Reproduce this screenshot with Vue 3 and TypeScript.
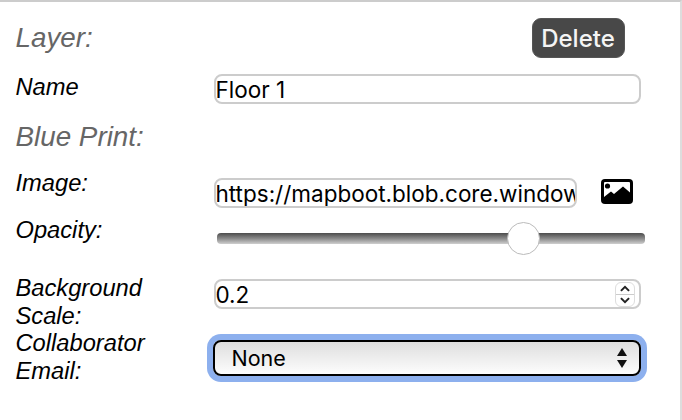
<script setup lang="ts">
import { ref } from 'vue'
const name = ref('Floor 1')
const image = ref('https://mapboot.blob.core.windows.net/images/floor1.png')
const opacity = ref(0.735)
const scale = ref(0.2)
const collaborator = ref('None')
</script>

<template>
  <div class="panel">
    <div class="head-row">
      <h2 class="section">Layer:</h2>
      <button class="delete" type="button">Delete</button>
    </div>
    <div class="row name-row">
      <label class="label">Name</label>
      <input v-model="name" class="field" type="text" />
    </div>
    <h2 class="section blue">Blue Print:</h2>
    <div class="row image-row">
      <label class="label">Image:</label>
      <div class="image-control">
        <input v-model="image" class="field" type="text" />
        <svg class="pic" viewBox="0 0 32 25" aria-hidden="true">
          <rect width="32" height="25" rx="4" fill="#000" />
          <rect x="3" y="3" width="26" height="17" rx="1" fill="#fff" />
          <circle cx="6.5" cy="7" r="2.6" fill="#000" />
          <path d="M3 18l7-5.500 3 2.500 9-7.500 7 6v6.500H3z" fill="#000" />
        </svg>
      </div>
    </div>
    <div class="row opacity-row">
      <label class="label">Opacity:</label>
      <input v-model="opacity" class="range" type="range" min="0" max="1" step="0.001" />
    </div>
    <div class="row scale-row">
      <label class="label">Background Scale:</label>
      <div class="number-wrap">
        <input v-model="scale" class="field number" type="number" step="0.1" />
        <span class="spin" aria-hidden="true">
          <svg viewBox="0 0 20 25"><path d="M5.500 8.500L10 4l4.500 4.500M5.500 16.500L10 21l4.500-4.500" fill="none" stroke="#222" stroke-width="2.200" /></svg>
        </span>
      </div>
    </div>
    <div class="row collab-row">
      <label class="label">Collaborator Email:</label>
      <div class="select-wrap">
        <select v-model="collaborator" class="select">
          <option>None</option>
        </select>
        <svg class="arrows" viewBox="0 0 12 20" aria-hidden="true"><path d="M6 0l5 8H1zM6 20l-5-8h10z" fill="#111" /></svg>
      </div>
    </div>
  </div>
</template>

<style>
html, body { margin: 0; background: #fff; }
</style>

<style scoped>
.panel {
  box-sizing: border-box;
  width: 682px;
  height: 420px;
  overflow: hidden;
  border-top: 2px solid #ccc;
  border-right: 2px solid #ddd;
  padding: 16px 0 0 15.500px;
  font-family: "Liberation Sans", Arial, sans-serif;
  color: #000;
}
.head-row {
  display: flex;
  justify-content: space-between;
  align-items: center;
  height: 40px;
  padding-right: 55.500px;
  margin-bottom: 16px;
}
.section {
  margin: 0;
  font-size: 27.800px;
  line-height: 32px;
  font-weight: 400;
  font-style: italic;
  color: #666;
}
.delete {
  width: 93px;
  height: 40px;
  border: 1px solid #555;
  border-radius: 9px;
  background: #484848;
  color: #f4f4f4;
  padding: 0;
  font-family: Inter, "Liberation Sans", sans-serif;
  font-size: 24px;
  font-weight: 500;
  letter-spacing: 0;
}
.row {
  display: grid;
  grid-template-columns: 198px 1fr;
}
.label {
  font-size: 23.700px;
  line-height: 28px;
  font-style: italic;
}
.field {
  box-sizing: border-box;
  width: 427px;
  height: 30px;
  border: 2px solid #ccc;
  border-radius: 8px;
  background: #fff;
  padding: 0;
  margin: 0;
  outline: none;
  color: #000;
  font-family: Inter, "Liberation Sans", sans-serif;
  font-size: 22.500px;
  letter-spacing: 0;
}
.name-row { height: 30px; }
.name-row .label { margin-top: -1px; }
.blue { margin-top: 17px; }
.image-row { margin-top: 25px; height: 30px; }
.image-row .label { margin-top: -9px; }
.image-control {
  display: flex;
  align-items: center;
  gap: 24px;
}
.image-control .field { width: 363px; }
.pic { width: 32px; height: 25px; flex: none; margin-top: -3px; }
.opacity-row { height: 40px; margin-top: 10px; }
.opacity-row .label { margin-top: -2px; }
.range {
  appearance: none;
  -webkit-appearance: none;
  width: 428px;
  height: 34px;
  margin: 3px 0 0 3px;
  background: transparent;
}
.range::-webkit-slider-runnable-track {
  height: 11px;
  border-radius: 4px;
  background: linear-gradient(#4c4c4c, #909090 55%, #cfcfcf);
}
.range::-webkit-slider-thumb {
  -webkit-appearance: none;
  appearance: none;
  box-sizing: border-box;
  width: 33px;
  height: 33px;
  margin-top: -11px;
  border-radius: 50%;
  border: 1px solid #bbb;
  background: #fff;
}
.scale-row { margin-top: 16px; height: 56px; }
.number-wrap { position: relative; width: 427px; height: 30px; margin-top: 5px; }
.number { appearance: textfield; -moz-appearance: textfield; }
.number::-webkit-inner-spin-button,
.number::-webkit-outer-spin-button { -webkit-appearance: none; margin: 0; }
.spin {
  position: absolute;
  right: 6px;
  top: 3px;
  width: 20px;
  height: 25px;
  border: 1px solid #ddd;
  border-radius: 6px;
  box-sizing: border-box;
  background: linear-gradient(#fff 48%, #ccc 48%, #ccc 52%, #fff 52%);
}
.spin svg { display: block; width: 18px; height: 23px; }
.collab-row { height: 56px; }
.collab-row .label { margin-top: -1px; }
.select-wrap { position: relative; width: 428px; height: 36px; margin: 10px 0 0 -1px; }
.select {
  appearance: none;
  -webkit-appearance: none;
  box-sizing: border-box;
  width: 100%;
  height: 36px;
  border: 2px solid #000;
  border-radius: 8px;
  box-shadow: 0 0 0 6px #8db0ee;
  outline: none;
  background: linear-gradient(#dedede, #ececec 45%, #fdfdfd);
  padding: 0 0 0 17px;
  margin: 0;
  color: #000;
  font-family: Inter, "Liberation Sans", sans-serif;
  font-size: 21.500px;
  letter-spacing: 0;
}
.arrows {
  position: absolute;
  right: 13px;
  top: 8px;
  width: 12px;
  height: 20px;
  pointer-events: none;
}
</style>
